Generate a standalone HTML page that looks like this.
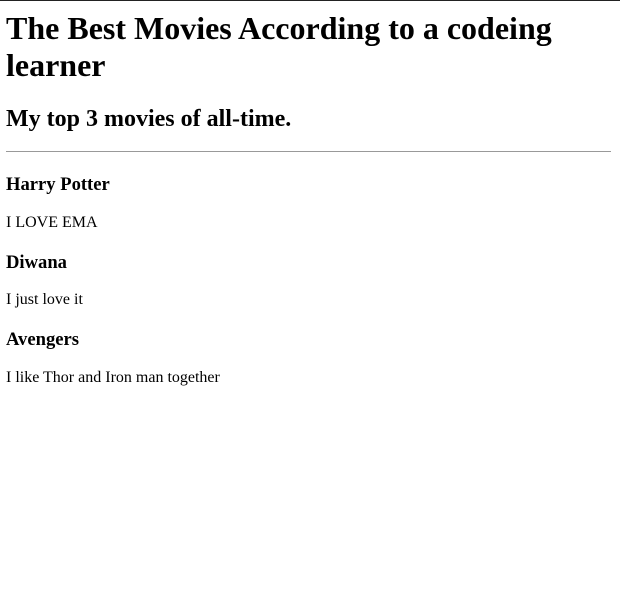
<!DOCTYPE html>
<html><head><style>
html,body{margin:0;padding:0;background:#fff}
body{border-top:1px solid #222;padding:0 9px 0 6px;font-family:"Liberation Serif",serif;color:#000}
h1{font-size:32px;margin:9px 0 0;line-height:37px}
h2{font-size:24px;margin:21px 0 0;line-height:28px}
hr{margin:18px 0 0;border:0;border-top:1px solid #999;height:0}
h4{font-size:18.6px;margin:20px 0 0;line-height:22px}
hr+h4{margin-top:22px}
p{font-size:16px;margin:18px 0 0;line-height:18px}
.p2{margin-top:17px}
</style></head><body>
<h1>The Best Movies According to a codeing learner</h1>
<h2>My top 3 movies of all-time.</h2>
<hr>
<h4>Harry Potter</h4>
<p>I LOVE EMA</p>
<h4>Diwana</h4>
<p class="p2">I just love it</p>
<h4>Avengers</h4>
<p>I like Thor and Iron man together</p>
</body></html>
